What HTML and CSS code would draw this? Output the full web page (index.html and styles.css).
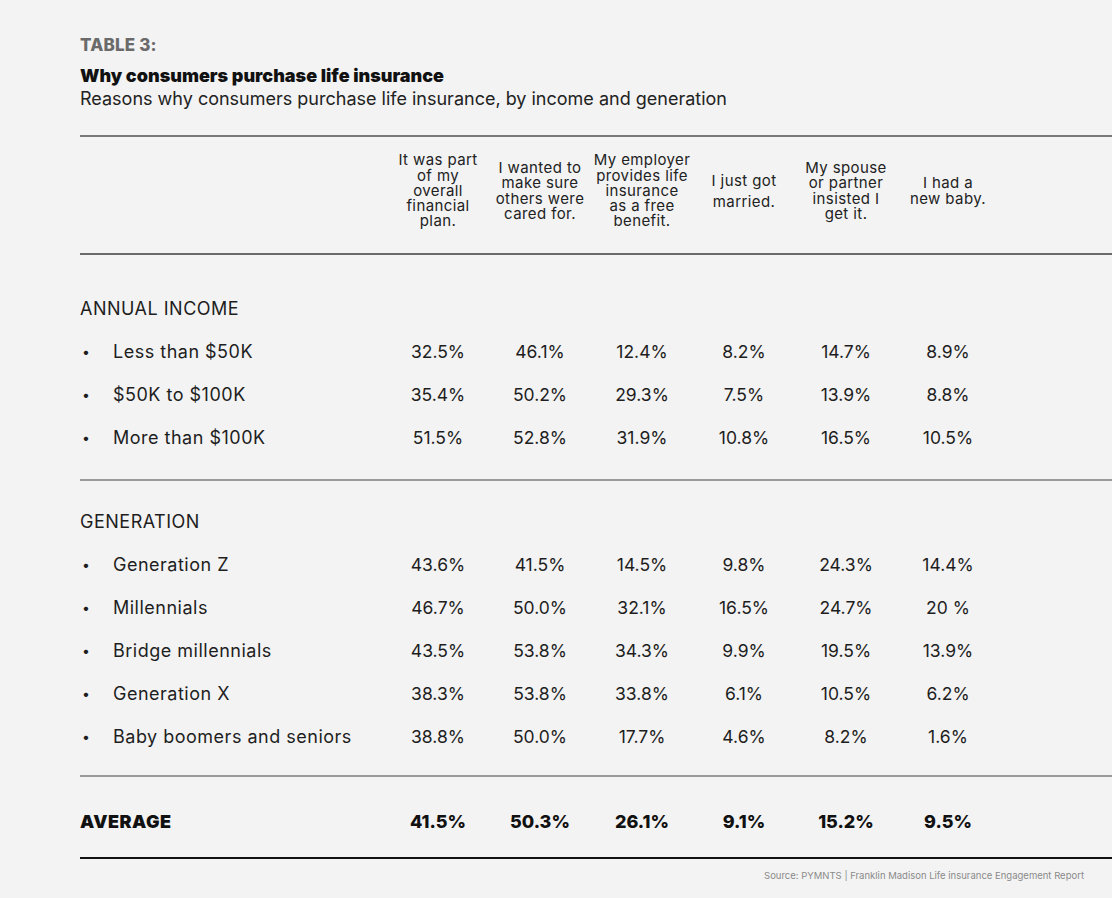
FILE: index.html
```html
<!DOCTYPE html>
<html>
<head>
<meta charset="utf-8">
<link rel="stylesheet" href="styles.css">
</head>
<body>
<div class="page">
  <div class="kicker">TABLE 3:</div>
  <h1 class="title">Why consumers purchase life insurance</h1>
  <p class="subtitle">Reasons why consumers purchase life insurance, by income and generation</p>

  <div class="table">
    <div class="row head">
      <div class="label"></div>
      <div class="hcell">It was part<br>of my<br>overall<br>financial<br>plan.</div>
      <div class="hcell">I wanted to<br>make sure<br>others were<br>cared for.</div>
      <div class="hcell">My employer<br>provides life<br>insurance<br>as a free<br>benefit.</div>
      <div class="hcell loose">I just got<br>married.</div>
      <div class="hcell">My spouse<br>or partner<br>insisted I<br>get it.</div>
      <div class="hcell">I had a<br>new baby.</div>
    </div>

    <div class="section income">
      <div class="row group"><div class="label">ANNUAL INCOME</div></div>
      <div class="row"><div class="label"><span class="dot">•</span>Less than $50K</div><div class="cell">32.5%</div><div class="cell">46.1%</div><div class="cell">12.4%</div><div class="cell">8.2%</div><div class="cell">14.7%</div><div class="cell">8.9%</div></div>
      <div class="row"><div class="label"><span class="dot">•</span>$50K to $100K</div><div class="cell">35.4%</div><div class="cell">50.2%</div><div class="cell">29.3%</div><div class="cell">7.5%</div><div class="cell">13.9%</div><div class="cell">8.8%</div></div>
      <div class="row"><div class="label"><span class="dot">•</span>More than $100K</div><div class="cell">51.5%</div><div class="cell">52.8%</div><div class="cell">31.9%</div><div class="cell">10.8%</div><div class="cell">16.5%</div><div class="cell">10.5%</div></div>
    </div>

    <div class="section generation">
      <div class="row group"><div class="label">GENERATION</div></div>
      <div class="row"><div class="label"><span class="dot">•</span>Generation Z</div><div class="cell">43.6%</div><div class="cell">41.5%</div><div class="cell">14.5%</div><div class="cell">9.8%</div><div class="cell">24.3%</div><div class="cell">14.4%</div></div>
      <div class="row"><div class="label"><span class="dot">•</span>Millennials</div><div class="cell">46.7%</div><div class="cell">50.0%</div><div class="cell">32.1%</div><div class="cell">16.5%</div><div class="cell">24.7%</div><div class="cell">20 %</div></div>
      <div class="row"><div class="label"><span class="dot">•</span>Bridge millennials</div><div class="cell">43.5%</div><div class="cell">53.8%</div><div class="cell">34.3%</div><div class="cell">9.9%</div><div class="cell">19.5%</div><div class="cell">13.9%</div></div>
      <div class="row"><div class="label"><span class="dot">•</span>Generation X</div><div class="cell">38.3%</div><div class="cell">53.8%</div><div class="cell">33.8%</div><div class="cell">6.1%</div><div class="cell">10.5%</div><div class="cell">6.2%</div></div>
      <div class="row"><div class="label"><span class="dot">•</span>Baby boomers and seniors</div><div class="cell">38.8%</div><div class="cell">50.0%</div><div class="cell">17.7%</div><div class="cell">4.6%</div><div class="cell">8.2%</div><div class="cell">1.6%</div></div>
    </div>

    <div class="row average">
      <div class="label">AVERAGE</div>
      <div class="cell">41.5%</div><div class="cell">50.3%</div><div class="cell">26.1%</div><div class="cell">9.1%</div><div class="cell">15.2%</div><div class="cell">9.5%</div>
    </div>
  </div>

  <div class="source">Source: PYMNTS | Franklin Madison Life insurance Engagement Report</div>
</div>
</body>
</html>
```

FILE: styles.css
```css
html, body {
  margin: 0;
  padding: 0;
  background: #f3f3f3;
}
body {
  font-family: Inter, "Open Sans", "Liberation Sans", sans-serif;
  color: #1e1e1e;
}
.page {
  padding: 35px 0 0 80px;
}
.kicker {
  font-size: 17px;
  font-weight: 800;
  color: #6a6a6a;
  line-height: 20px;
  letter-spacing: 0.2px;
}
.title {
  margin: 10px 0 0;
  font-size: 18px;
  font-weight: 900;
  color: #111;
  line-height: 22px;
}
.subtitle {
  margin: 1px 0 0;
  font-size: 18px;
  font-weight: 400;
  color: #222;
  line-height: 22px;
}
.table {
  margin-top: 25px;
  border-top: 2px solid #7a7a7a;
}
.row {
  display: grid;
  grid-template-columns: 307px repeat(6, 102px) 1fr;
  align-items: center;
  height: 43px;
  font-size: 17.5px;
}
.label {
  display: flex;
  align-items: center;
  font-size: 18px;
  letter-spacing: 0.5px;
}
.dot {
  width: 33px;
  padding-left: 2px;
  box-sizing: border-box;
  font-size: 14px;
}
.cell {
  text-align: center;
}
.head {
  height: 116px;
  border-bottom: 2px solid #6a6a6a;
}
.hcell {
  text-align: center;
  font-size: 15px;
  line-height: 15.3px;
  letter-spacing: 0.4px;
  color: #222;
  padding-bottom: 9px;
}
.hcell.loose {
  line-height: 21px;
}
.section {
  border-bottom: 2px solid #9a9a9a;
}
.income {
  padding: 32px 0 20px;
}
.generation {
  padding: 19px 0 17px;
}
.average {
  box-sizing: border-box;
  height: 82px;
  padding-top: 8px;
  border-bottom: 2px solid #111;
  font-weight: 800;
  font-size: 18px;
  color: #111;
}
.average .label {
  font-weight: 900;
}
.source {
  text-align: right;
  padding-right: 28px;
  margin-top: 11px;
  font-size: 9.5px;
  color: #8a8a8a;
}
```
